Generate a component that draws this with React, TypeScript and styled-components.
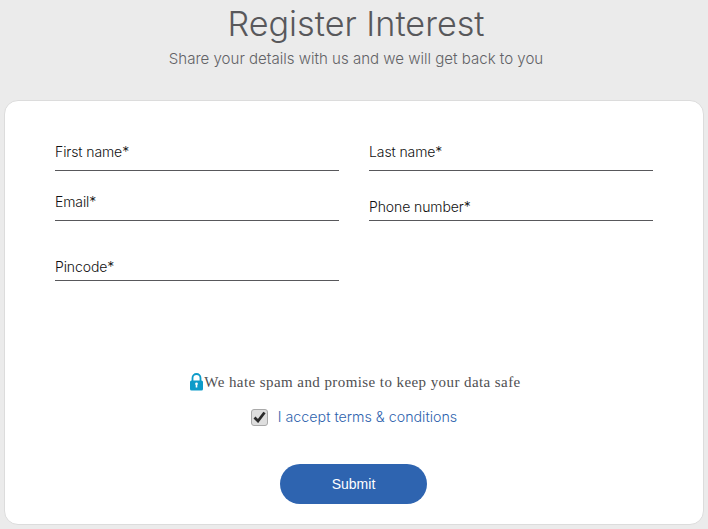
import React from "react";
import styled, { createGlobalStyle } from "styled-components";

const Global = createGlobalStyle`
  html, body { margin: 0; padding: 0; background: #ebebeb; }
  body { font-family: "Inter", "Liberation Sans", sans-serif; }
  * { box-sizing: border-box; }
`;

const Page = styled.div`
  width: 708px;
  height: 529px;
  padding: 0 4px 4px;
  display: flex;
  flex-direction: column;
  background: #ebebeb;
  overflow: hidden;
`;

const Header = styled.header`
  height: 100px;
  padding: 3px 0 0 4px;
  text-align: center;
`;

const Title = styled.h1`
  margin: 0;
  font-size: 34.2px;
  line-height: 42px;
  font-weight: 300;
  color: #58585b;
`;

const Subtitle = styled.p`
  margin: 3px 0 0;
  font-size: 15.05px;
  line-height: 22px;
  font-weight: 300;
  color: #626266;
`;

const Card = styled.form`
  flex: 1;
  background: #fff;
  border: 1px solid #dcdcdc;
  border-radius: 14px;
  padding: 0 50px;
  display: flex;
  flex-direction: column;
`;

const Fields = styled.div`
  display: grid;
  grid-template-columns: 284px 284px;
  grid-template-rows: 70px 50px 60px;
  column-gap: 30px;
`;

const Field = styled.div<{ $gap: number }>`
  display: flex;
  align-items: flex-end;
  height: 100%;
  border-bottom: 1px solid #58585b;
  padding-bottom: ${(p) => p.$gap}px;
  font-size: 14px;
  line-height: 20px;
  font-weight: 300;
  letter-spacing: -0.1px;
  color: #111;
`;

const Spam = styled.div`
  margin-top: 90px;
  padding-left: 2px;
  display: flex;
  justify-content: center;
  align-items: center;
  height: 22px;
  font-family: "Liberation Serif", serif;
  font-size: 15px;
  letter-spacing: 0.42px;
  color: #4f4f52;
`;

const Accept = styled.label`
  margin-top: 14px;
  display: flex;
  justify-content: center;
  align-items: center;
  gap: 10px;
  font-size: 14.25px;
  line-height: 20px;
  font-weight: 300;
  color: #2e62ad;
`;

const Box = styled.span`
  width: 17px;
  height: 17px;
  border: 1px solid #a9a9a9;
  border-radius: 3px;
  background: #dedede;
  display: flex;
  align-items: center;
  justify-content: center;
`;

const Submit = styled.button`
  align-self: center;
  margin-top: 37px;
  margin-right: 1px;
  width: 147px;
  height: 40px;
  border: 0;
  border-radius: 20px;
  background: #2e64b0;
  color: #fff;
  font-family: "Liberation Sans", sans-serif;
  font-size: 14px;
`;

export default function App() {
  return (
    <Page>
      <Global />
      <Header>
        <Title>Register Interest</Title>
        <Subtitle>Share your details with us and we will get back to you</Subtitle>
      </Header>
      <Card>
        <Fields>
          <Field $gap={8}>First name*</Field>
          <Field $gap={8}>Last name*</Field>
          <Field $gap={8}>Email*</Field>
          <Field $gap={3}>Phone number*</Field>
          <Field $gap={3}>Pincode*</Field>
        </Fields>
        <Spam>
          <svg width="15" height="18" viewBox="0 0 15 18" aria-hidden="true">
            <path d="M3.5 8V5a4 4 0 0 1 8 0v3" fill="none" stroke="#0d9bc9" strokeWidth="1.8" />
            <rect x="1" y="7.5" width="13" height="10" rx="1.5" fill="#0d9bc9" />
            <rect x="6.7" y="10.5" width="1.6" height="4" fill="#fff" />
            <circle cx="7.5" cy="10.8" r="1.3" fill="#fff" />
          </svg>
          We hate spam and promise to keep your data safe
        </Spam>
        <Accept>
          <Box>
            <svg width="13" height="12" viewBox="0 0 13 12" aria-hidden="true">
              <path d="M1.5 6.5 5 10l6.5-8.5" fill="none" stroke="#2b2b2b" strokeWidth="2.8" />
            </svg>
          </Box>
          I accept terms &amp; conditions
        </Accept>
        <Submit type="button">Submit</Submit>
      </Card>
    </Page>
  );
}
